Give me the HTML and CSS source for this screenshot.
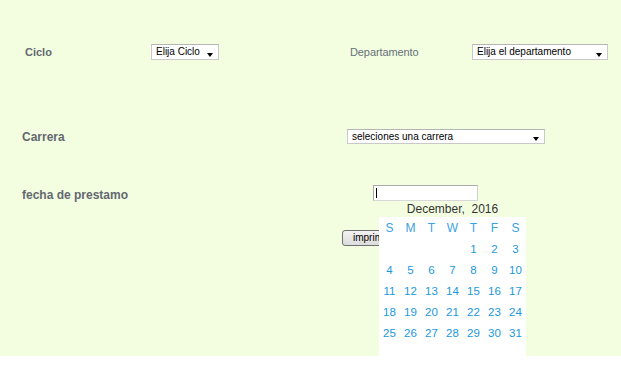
FILE: index.html
```html
<!DOCTYPE html>
<html>
<head>
<meta charset="utf-8">
<link rel="stylesheet" href="styles.css">
</head>
<body>
<div class="page">
  <div class="row row-ciclo">
    <div class="lbl lbl-ciclo">Ciclo</div>
    <div class="sel sel-ciclo"><span>Elija Ciclo</span><i class="arrow"></i></div>
    <div class="lbl-dep">Departamento</div>
    <div class="sel sel-dep"><span>Elija el departamento</span><i class="arrow"></i></div>
  </div>
  <div class="row row-carrera">
    <div class="lbl lbl-big lbl-carrera">Carrera</div>
    <div class="sel sel-carrera"><span>seleciones una carrera</span><i class="arrow"></i></div>
  </div>
  <div class="row row-fecha">
    <div class="lbl lbl-big lbl-fecha">fecha de prestamo</div>
    <div class="date-wrap">
      <div class="txt"><i class="caret"></i></div>
      <div class="cal">
        <div class="cal-title">December,&nbsp; 2016</div>
        <table class="cal-grid">
          <tr class="wd"><td>S</td><td>M</td><td>T</td><td>W</td><td>T</td><td>F</td><td>S</td></tr>
          <tr><td></td><td></td><td></td><td></td><td>1</td><td>2</td><td>3</td></tr>
          <tr><td>4</td><td>5</td><td>6</td><td>7</td><td>8</td><td>9</td><td>10</td></tr>
          <tr><td>11</td><td>12</td><td>13</td><td>14</td><td>15</td><td>16</td><td>17</td></tr>
          <tr><td>18</td><td>19</td><td>20</td><td>21</td><td>22</td><td>23</td><td>24</td></tr>
          <tr><td>25</td><td>26</td><td>27</td><td>28</td><td>29</td><td>30</td><td>31</td></tr>
          <tr><td></td><td></td><td></td><td></td><td></td><td></td><td></td></tr>
        </table>
      </div>
    </div>
  </div>
  <div class="row row-btn">
    <button class="btn">imprimir</button>
  </div>
</div>
</body>
</html>
```
FILE: styles.css
```css
html, body {
  margin: 0;
  padding: 0;
  background: #ffffff;
}
body {
  font-family: "Liberation Sans", Arial, sans-serif;
}
.page {
  background: #f3fee1;
  height: 356px;
  padding-top: 44px;
  box-sizing: border-box;
}
.row {
  display: flex;
  align-items: center;
}
.lbl {
  font-size: 11px;
  font-weight: bold;
  color: #636870;
}
.lbl-big {
  font-size: 12px;
}
.row-ciclo {
  padding-left: 25px;
  height: 16px;
}
.lbl-ciclo {
  width: 126px;
}
.lbl-dep {
  margin-left: 131px;
  width: 122px;
  font-size: 11px;
  color: #66707a;
  letter-spacing: -0.1px;
}
.sel {
  position: relative;
  height: 16px;
  box-sizing: border-box;
  background: #fff;
  border: 1px solid #c9c9c9;
  border-top-color: #b5b5b5;
  font-size: 10px;
  color: #000;
  padding-left: 4px;
  line-height: 14px;
  white-space: nowrap;
}
.arrow {
  position: absolute;
  right: 5px;
  top: 8px;
  width: 0;
  height: 0;
  border-left: 3.5px solid transparent;
  border-right: 3.5px solid transparent;
  border-top: 4px solid #000;
}
.sel-ciclo {
  width: 68px;
}
.sel-dep {
  width: 136px;
}
.row-carrera {
  margin-top: 69px;
  padding-left: 22px;
  height: 15px;
}
.lbl-carrera {
  width: 325px;
}
.sel-carrera {
  width: 198px;
  height: 15px;
  line-height: 13px;
}
.sel-carrera .arrow {
  top: 7px;
}
.row-fecha {
  margin-top: 41px;
  padding-left: 22px;
  height: 16px;
}
.lbl-fecha {
  width: 351px;
  padding-top: 3px;
}
.date-wrap {
  position: relative;
}
.txt {
  width: 105px;
  height: 16px;
  box-sizing: border-box;
  background: #fff;
  border: 1px solid #ababab;
  border-bottom-color: #d8d8d8;
  border-right-color: #d0d0d0;
  position: relative;
}
.caret {
  position: absolute;
  left: 2px;
  top: 2px;
  width: 1px;
  height: 10px;
  background: #000;
}
.cal {
  position: absolute;
  left: 6px;
  top: 100%;
  width: 147px;
  z-index: 2;
}
.cal-title {
  height: 16px;
  line-height: 16px;
  text-align: center;
  font-size: 12px;
  color: #333;
}
.cal-grid {
  background: #fff;
  border-collapse: collapse;
  width: 147px;
  table-layout: fixed;
}
.cal-grid td {
  width: 21px;
  height: 21px;
  padding: 0;
  text-align: center;
  font-size: 11.5px;
  color: #1a98dd;
}
.cal-grid .wd td {
  font-size: 12px;
  color: #3aa2e0;
}
.row-btn {
  margin-top: 29px;
  padding-left: 342px;
}
.btn {
  height: 16px;
  width: 60px;
  padding: 0 0 0 10px;
  text-align: left;
  font-family: "Liberation Sans", Arial, sans-serif;
  font-size: 10px;
  color: #000;
  border: 1px solid #707070;
  border-radius: 3px;
  background: linear-gradient(#f2f2f2, #dcdcdc);
  line-height: 14px;
}
```
